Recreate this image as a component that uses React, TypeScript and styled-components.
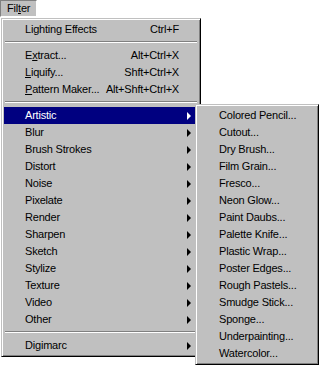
import React from 'react';
import styled, { createGlobalStyle } from 'styled-components';

const GlobalStyle = createGlobalStyle`
  html, body {
    margin: 0;
    padding: 0;
    background: #fff;
  }
  body {
    font-family: "Liberation Sans", Arial, sans-serif;
    font-size: 11px;
    letter-spacing: -0.2px;
    color: #000;
  }
`;

const Page = styled.div`
  position: relative;
  width: 321px;
  height: 388px;
  overflow: hidden;
`;

const MenuBar = styled.div`
  display: flex;
  height: 18px;
`;

const BarButton = styled.div`
  box-sizing: border-box;
  width: 37px;
  height: 17px;
  display: flex;
  align-items: center;
  padding: 0 0 1px 6px;
  background: #c0c0c0;
  border: 1px solid;
  border-color: #808080 #fff #fff #808080;
`;

const Panel = styled.div<{ $width: number }>`
  box-sizing: border-box;
  width: ${(p) => p.$width}px;
  background: #c0c0c0;
  border: 1px solid;
  border-color: #c0c0c0 #000 #000 #c0c0c0;
  box-shadow: inset 1px 1px #fff, inset -1px -1px #808080;
  padding: 2px;
`;

const MainMenu = styled(Panel)`
  margin-left: 1px;
`;

const SubMenu = styled(Panel)`
  position: absolute;
  left: 195px;
  top: 104px;
`;

const Item = styled.div<{ $active?: boolean }>`
  box-sizing: border-box;
  display: grid;
  grid-template-columns: 1fr auto 19px;
  align-items: center;
  height: 17px;
  padding: 0 0 1px 21px;
  white-space: nowrap;
  background: ${(p) => (p.$active ? '#000080' : 'transparent')};
  color: ${(p) => (p.$active ? '#fff' : '#000')};
`;

const Shortcut = styled.span`
  text-align: right;
`;

const Arrow = styled.span<{ $active?: boolean }>`
  width: 0;
  height: 0;
  margin: 1px 0 0 8px;
  border-top: 4px solid transparent;
  border-bottom: 4px solid transparent;
  border-left: 4px solid ${(p) => (p.$active ? '#fff' : '#000')};
`;

const Separator = styled.div`
  height: 9px;
  padding: 3px 1px 0;
  box-sizing: border-box;

  &::before {
    content: '';
    display: block;
    border-top: 1px solid #808080;
    border-bottom: 1px solid #fff;
  }
`;

type Entry =
  | { sep: true }
  | { label: React.ReactNode; shortcut?: string; sub?: boolean; active?: boolean };

const mainItems: Entry[] = [
  { label: 'Lighting Effects', shortcut: 'Ctrl+F' },
  { sep: true },
  { label: <>E<u>x</u>tract...</>, shortcut: 'Alt+Ctrl+X' },
  { label: <><u>L</u>iquify...</>, shortcut: 'Shft+Ctrl+X' },
  { label: <><u>P</u>attern Maker...</>, shortcut: 'Alt+Shft+Ctrl+X' },
  { sep: true },
  { label: 'Artistic', sub: true, active: true },
  { label: 'Blur', sub: true },
  { label: 'Brush Strokes', sub: true },
  { label: 'Distort', sub: true },
  { label: 'Noise', sub: true },
  { label: 'Pixelate', sub: true },
  { label: 'Render', sub: true },
  { label: 'Sharpen', sub: true },
  { label: 'Sketch', sub: true },
  { label: 'Stylize', sub: true },
  { label: 'Texture', sub: true },
  { label: 'Video', sub: true },
  { label: 'Other', sub: true },
  { sep: true },
  { label: 'Digimarc', sub: true },
];

const artistic = [
  'Colored Pencil...',
  'Cutout...',
  'Dry Brush...',
  'Film Grain...',
  'Fresco...',
  'Neon Glow...',
  'Paint Daubs...',
  'Palette Knife...',
  'Plastic Wrap...',
  'Poster Edges...',
  'Rough Pastels...',
  'Smudge Stick...',
  'Sponge...',
  'Underpainting...',
  'Watercolor...',
];

const App: React.FC = () => {
  return (
    <Page>
      <GlobalStyle />
      <MenuBar>
        <BarButton>
          <span>
            Fil<u>t</u>er
          </span>
        </BarButton>
      </MenuBar>
      <MainMenu $width={200}>
        {mainItems.map((e, i) =>
          'sep' in e ? (
            <Separator key={i} />
          ) : (
            <Item key={i} $active={e.active}>
              <span>{e.label}</span>
              <Shortcut>{e.shortcut}</Shortcut>
              {e.sub ? <Arrow $active={e.active} /> : <span />}
            </Item>
          )
        )}
      </MainMenu>
      <SubMenu $width={124}>
        {artistic.map((name) => (
          <Item key={name}>
            <span>{name}</span>
            <span />
            <span />
          </Item>
        ))}
      </SubMenu>
    </Page>
  );
};

export default App;
